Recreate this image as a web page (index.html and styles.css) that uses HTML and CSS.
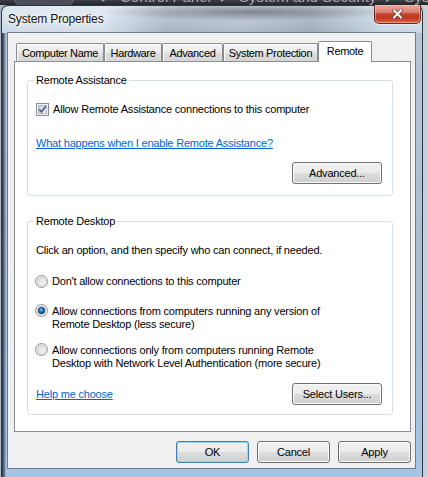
FILE: index.html
```html
<!DOCTYPE html>
<html>
<head>
<meta charset="utf-8">
<link rel="stylesheet" href="styles.css">
</head>
<body>
<div class="crumbs">
  <span class="nav"></span>
  <span class="crumb-items"><span>▸</span><span>Control Panel</span><span>▸</span><span>System and Security</span><span>▸</span><span>System</span></span>
</div>
<div class="window">
  <div class="titlebar">
    <span class="title">System Properties</span>
    <span class="close">
      <svg width="11" height="10" viewBox="0 0 11 10">
        <path d="M2 1.5 L9 8.5 M9 1.5 L2 8.5" stroke="#4a2a28" stroke-width="3.6" stroke-linecap="square" fill="none" opacity="0.75"/>
        <path d="M2 1.5 L9 8.5 M9 1.5 L2 8.5" stroke="#ffffff" stroke-width="2" stroke-linecap="square" fill="none"/>
      </svg>
    </span>
  </div>
  <div class="client">
    <div class="tabs">
      <div class="tab t-cn">Computer Name</div>
      <div class="tab t-hw">Hardware</div>
      <div class="tab t-adv">Advanced</div>
      <div class="tab t-sp">System Protection</div>
      <div class="tab sel t-rm">Remote</div>
    </div>
    <div class="panel">
      <div class="group g1">
        <span class="legend">Remote Assistance</span>
        <div class="opt-row">
          <svg class="cb" width="13" height="13" viewBox="0 0 13 13">
            <defs>
              <linearGradient id="cbg" x1="0" y1="0" x2="1" y2="1">
                <stop offset="0" stop-color="#cdd1d6"/>
                <stop offset="1" stop-color="#f7f7f7"/>
              </linearGradient>
            </defs>
            <rect x="0.5" y="0.5" width="12" height="12" fill="#f5f5f5" stroke="#8e8f8f"/>
            <rect x="2.5" y="2.5" width="8" height="8" fill="url(#cbg)" stroke="#b3b7bd"/>
            <path d="M3.2 6.4 L5.4 8.8 L9.8 3.2" stroke="#4b6195" stroke-width="1.8" fill="none"/>
          </svg>
          <span class="lbl">Allow Remote Assistance connections to this computer</span>
        </div>
        <a class="link l1">What happens when I enable Remote Assistance?</a>
        <div class="btn-row"><span class="btn w90">Advanced...</span></div>
      </div>
      <div class="group g2">
        <span class="legend">Remote Desktop</span>
        <div class="line">Click an option, and then specify who can connect, if needed.</div>
        <div class="opt-row r1">
          <svg class="rb" width="13" height="13" viewBox="0 0 13 13">
            <defs>
              <linearGradient id="rg1" x1="0" y1="0" x2="1" y2="1">
                <stop offset="0" stop-color="#d4d6d9"/>
                <stop offset="1" stop-color="#fbfbfb"/>
              </linearGradient>
            </defs>
            <circle cx="6.5" cy="6.5" r="6" fill="#f4f4f4" stroke="#8e8f8f"/>
            <circle cx="6.5" cy="6.5" r="4.2" fill="url(#rg1)" stroke="#bfc3c8" stroke-width="0.7"/>
          </svg>
          <span class="lbl">Don't allow connections to this computer</span>
        </div>
        <div class="opt-row r2">
          <svg class="rb" width="13" height="13" viewBox="0 0 13 13">
            <defs>
              <radialGradient id="rdot" cx="0.45" cy="0.4" r="0.6">
                <stop offset="0" stop-color="#7fd0fa"/>
                <stop offset="0.45" stop-color="#2379c4"/>
                <stop offset="1" stop-color="#0d3565"/>
              </radialGradient>
            </defs>
            <circle cx="6.5" cy="6.5" r="6" fill="#f4f4f4" stroke="#8e8f8f"/>
            <circle cx="6.5" cy="6.5" r="4.2" fill="#e6e8ea" stroke="#bfc3c8" stroke-width="0.7"/>
            <circle cx="6.5" cy="6.5" r="3.3" fill="url(#rdot)" stroke="#173e6b" stroke-width="0.6"/>
          </svg>
          <span class="lbl">Allow connections from computers running any version of<br>Remote Desktop (less secure)</span>
        </div>
        <div class="opt-row r3">
          <svg class="rb" width="13" height="13" viewBox="0 0 13 13">
            <defs>
              <linearGradient id="rg3" x1="0" y1="0" x2="1" y2="1">
                <stop offset="0" stop-color="#d4d6d9"/>
                <stop offset="1" stop-color="#fbfbfb"/>
              </linearGradient>
            </defs>
            <circle cx="6.5" cy="6.5" r="6" fill="#f4f4f4" stroke="#8e8f8f"/>
            <circle cx="6.5" cy="6.5" r="4.2" fill="url(#rg3)" stroke="#bfc3c8" stroke-width="0.7"/>
          </svg>
          <span class="lbl">Allow connections only from computers running Remote<br>Desktop with Network Level Authentication (more secure)</span>
        </div>
        <div class="foot-row">
          <a class="link">Help me choose</a>
          <span class="btn w90">Select Users...</span>
        </div>
      </div>
    </div>
    <div class="actions">
      <span class="btn w73 default">OK</span>
      <span class="btn w73">Cancel</span>
      <span class="btn w73">Apply</span>
    </div>
  </div>
</div>
</body>
</html>
```
FILE: styles.css
```css
* { box-sizing: border-box; }
html, body { margin: 0; padding: 0; }
body {
  width: 428px;
  height: 477px;
  overflow: hidden;
  background: linear-gradient(90deg, #aeb9c5 0, #c9d0d8 100%);
  font-family: "Liberation Sans", Arial, sans-serif;
  font-size: 11px;
  color: #000;
}
.crumbs {
  height: 5px;
  overflow: hidden;
  background: linear-gradient(180deg, #3b3f46, #23272d);
  display: flex;
  align-items: flex-start;
  padding-left: 14px;
}
.nav {
  width: 60px;
  height: 20px;
  margin-top: -12px;
  border-radius: 10px;
  background: #4a4f57;
  border: 1px solid #6b7078;
  flex: none;
}
.crumb-items {
  display: flex;
  gap: 10px;
  margin-top: -10px;
  margin-left: 28px;
  line-height: 14px;
  font-size: 15px;
  color: #a7a9ad;
  white-space: nowrap;
  filter: blur(0.4px);
}
.window {
  margin-left: 1px;
  width: 422px;
  height: 473px;
  border: 1px solid #2c3746;
  border-bottom: none;
  border-radius: 7px 7px 0 0;
  background:
    radial-gradient(ellipse 150px 9px at 250px 6px, rgba(70,76,86,0.55), rgba(70,76,86,0)) top left / 100% 27px no-repeat,
    linear-gradient(180deg, rgba(255,255,255,0.4) 0, rgba(255,255,255,0.05) 26px, rgba(255,255,255,0) 27px) top left / 100% 27px no-repeat,
    linear-gradient(90deg, #cbd8e6 0, #d3deea 100px, #a3b0be 165px, #aeb9c6 240px, #9aa7b6 310px, #b4c2d1 355px, #c6d4e3 380px, #c9d7e6 100%) top left / 100% 27px no-repeat,
    linear-gradient(90deg, rgba(18,32,52,0.85) 0, rgba(18,32,52,0.55) 2px, rgba(18,32,52,0) 4px) 0 27px / 6px 100% no-repeat,
    linear-gradient(180deg, #b8c7d7 0, #a9bdd3 55%, #a6c4e4 100%);
}
.titlebar {
  height: 26px;
  display: flex;
  justify-content: space-between;
  align-items: flex-start;
  padding-left: 6px;
}
.title {
  margin-top: 6px;
  font-size: 12px;
  line-height: 14px;
  letter-spacing: -0.15px;
  color: #111;
  text-shadow: 0 0 6px #fff, 0 0 10px #fff, 0 0 3px rgba(255,255,255,0.9);
}
.close {
  width: 47px;
  height: 19px;
  margin-top: -1px;
  margin-right: 1px;
  border: 1px solid #6e2a22;
  border-top: none;
  border-radius: 0 0 5px 5px;
  background: linear-gradient(180deg, #e7aa9c 0, #d98272 40%, #c5422b 50%, #c23720 72%, #d96a4d 100%);
  box-shadow: inset 0 0 0 1px rgba(255,210,200,0.45), 0 1px 0 rgba(255,255,255,0.5);
  display: flex;
  align-items: center;
  justify-content: center;
}
.client {
  margin: 0 6px 0 5px;
  height: 437px;
  border: 1px solid #6f7b89;
  background: #f0f0f0;
  padding: 8px 4px 5px 6px;
}
.tabs {
  height: 20px;
  display: flex;
  align-items: flex-start;
  padding-left: 2px;
}
.tab {
  height: 18px;
  margin-top: 2px;
  border: 1px solid #898c95;
  border-bottom: none;
  border-radius: 2px 2px 0 0;
  background: linear-gradient(180deg, #f5f5f5 0, #ebebeb 50%, #dedede 52%, #d6d6d6 100%);
  box-shadow: inset 1px 1px 0 #fdfdfd;
  text-align: center;
  padding-top: 3px;
  line-height: 13px;
  letter-spacing: -0.35px;
  white-space: nowrap;
  flex: none;
}
.t-cn { width: 88px; }
.t-hw { width: 58px; }
.t-adv { width: 61px; }
.t-sp { width: 95px; }
.t-rm { width: 54px; }
.tab.sel {
  height: 21px;
  margin-top: 0;
  background: #fff;
  box-shadow: none;
  position: relative;
  z-index: 2;
}
.panel {
  height: 371px;
  border: 1px solid #898c95;
  background: #fff;
  padding: 18px 17px 16px 12px;
}
.group {
  position: relative;
  border: 1px solid #d5dfe5;
  border-radius: 3px;
  padding: 22px 10px 0 8px;
}
.g1 { height: 116px; }
.g2 { height: 194px; margin-top: 25px; }
.legend {
  position: absolute;
  top: -7px;
  left: 6px;
  padding: 0 2px;
  background: #fff;
  line-height: 13px;
  letter-spacing: -0.2px;
}
.opt-row {
  display: flex;
  align-items: flex-start;
  line-height: 13px;
  letter-spacing: -0.2px;
}
.cb { flex: none; margin-right: 4px; }
.rb { flex: none; margin-left: -1px; margin-right: 4px; }
.r2 .rb, .r3 .rb { margin-top: -1px; }
.line { line-height: 13px; letter-spacing: -0.2px; }
.r1 { margin-top: 18px; }
.r2 { margin-top: 17px; }
.r3 { margin-top: 13px; }
.link {
  color: #0066cc;
  text-decoration: underline;
  line-height: 13px;
  letter-spacing: -0.2px;
}
.l1 { display: block; margin-top: 21px; width: max-content; }
.btn-row {
  display: flex;
  justify-content: flex-end;
  margin-top: 12px;
}
.foot-row {
  display: flex;
  justify-content: space-between;
  align-items: center;
  height: 22px;
  margin-top: 13px;
}
.btn {
  height: 22px;
  display: flex;
  align-items: center;
  justify-content: center;
  border: 1px solid #707070;
  border-radius: 3px;
  background: linear-gradient(180deg, #f2f2f2 0, #ebebeb 48%, #dddddd 52%, #cfcfcf 100%);
  box-shadow: inset 0 0 0 1px #fbfbfb;
  letter-spacing: -0.2px;
  color: #000;
  white-space: nowrap;
}
.w90 { width: 90px; }
.w73 { width: 73px; }
.btn.default {
  border-color: #3c7fb1;
  box-shadow: inset 0 0 0 1px #9ad8f6;
}
.actions {
  display: flex;
  justify-content: flex-end;
  gap: 8px;
  margin-top: 9px;
}
```
